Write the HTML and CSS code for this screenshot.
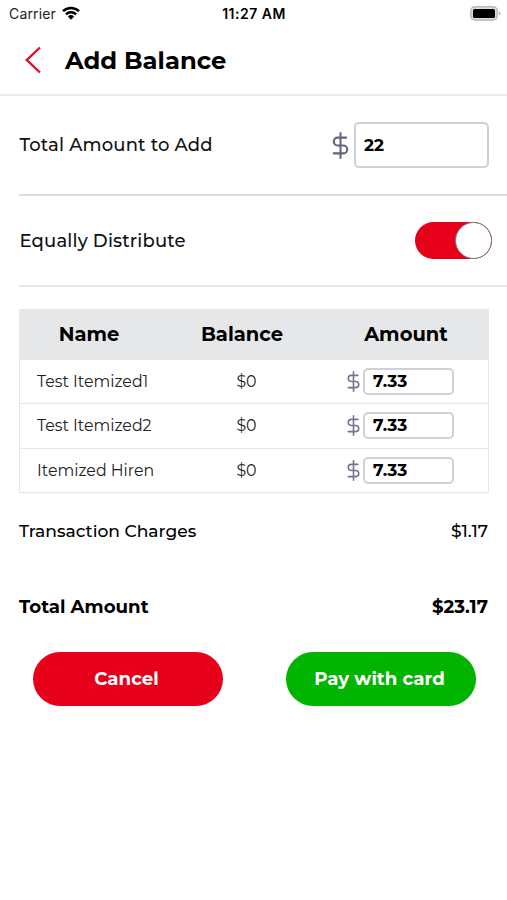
FILE: index.html
```html
<!DOCTYPE html>
<html lang="en">
<head>
<meta charset="utf-8">
<title>Add Balance</title>
<link rel="stylesheet" href="styles.css">
</head>
<body>
<svg class="symbols" aria-hidden="true">
  <symbol id="dollar" viewBox="5 0 14 24">
    <path d="M12 1v22M17 5H9.5a3.5 3.5 0 0 0 0 7h5a3.5 3.5 0 0 1 0 7H6" fill="none" stroke="currentColor" stroke-width="1.8" stroke-linecap="round" stroke-linejoin="round"/>
  </symbol>
</svg>
<div class="status">
  <div class="carrier"><span>Carrier</span>
    <svg class="wifi" viewBox="0 0 18 14"><path d="M1 5.2a11.3 11.3 0 0 1 16 0M3.9 8.3a7.2 7.2 0 0 1 10.2 0" fill="none" stroke="#000" stroke-width="2.5"/><path d="M5.8 10.5a4.7 4.7 0 0 1 6.4 0L9 13.8z"/></svg>
  </div>
  <div class="time">11:27 AM</div>
  <svg class="battery" viewBox="0 0 31 15"><rect x=".8" y=".8" width="26.4" height="13.2" rx="4" fill="#ddd" stroke="#b9b9b9" stroke-width="1.4"/><rect x="3" y="3" width="22" height="9" rx="1.6"/><path d="M28.8 5.2q1.8.6 1.8 2.2t-1.8 2.2z" fill="#b9b9b9"/></svg>
</div>
<header class="header">
  <svg class="back" viewBox="0 0 16 28"><path d="M15 1.5L1.8 14 15 26.5" fill="none" stroke="#df1024" stroke-width="2.4"/></svg>
  <h1 class="title">Add Balance</h1>
</header>
<main class="main">
  <section class="row row-total">
    <span class="label">Total Amount to Add</span>
    <div class="field"><svg class="dollar"><use href="#dollar"/></svg><div class="input">22</div></div>
  </section>
  <section class="row row-switch">
    <span class="label">Equally Distribute</span>
    <div class="switch"><div class="knob"></div></div>
  </section>
  <div class="table">
    <div class="tr th"><span>Name</span><span>Balance</span><span>Amount</span></div>
    <div class="tr"><span class="name">Test Itemized1</span><span class="zero">$0</span><div class="amount"><svg class="dollar-s"><use href="#dollar"/></svg><div class="input-s">7.33</div></div></div>
    <div class="tr"><span class="name">Test Itemized2</span><span class="zero">$0</span><div class="amount"><svg class="dollar-s"><use href="#dollar"/></svg><div class="input-s">7.33</div></div></div>
    <div class="tr"><span class="name">Itemized Hiren</span><span class="zero">$0</span><div class="amount"><svg class="dollar-s"><use href="#dollar"/></svg><div class="input-s">7.33</div></div></div>
  </div>
  <div class="sum"><span>Transaction Charges</span><span>$1.17</span></div>
  <div class="sum strong"><span>Total Amount</span><span>$23.17</span></div>
  <div class="actions"><div class="btn red">Cancel</div><div class="btn green">Pay with card</div></div>
</main>
</body>
</html>
```
FILE: styles.css
```css
* { box-sizing: border-box; }
body { margin: 0; width: 507px; height: 900px; overflow: hidden; background: #fff; color: #000; font-family: Montserrat, Inter, sans-serif; white-space: nowrap; }
svg { display: block; flex: none; overflow: visible; }
.symbols { width: 0; height: 0; position: absolute; }
.status { display: grid; grid-template-columns: 1fr auto 1fr; align-items: center; height: 27px; padding: 0 6px 0 9px; font: 400 14px/27px Inter, sans-serif; }
.carrier { display: flex; align-items: center; gap: 6px; color: #222; letter-spacing: .15px; }
.wifi { width: 18px; height: 14px; margin-top: -2px; }
.time { font-weight: 600; letter-spacing: .5px; margin-left: -2px; }
.battery { width: 31px; height: 15px; justify-self: end; }
.header { display: flex; align-items: center; height: 69px; padding: 0 0 2px 25px; border-bottom: 2px solid #ececee; }
.back { width: 16px; height: 28px; margin-right: 24px; }
.title { margin: 0; font-size: 24.3px; line-height: 30px; font-weight: 700; }
.main { padding-left: 19px; }
.row { display: flex; align-items: center; justify-content: space-between; font-size: 18px; font-weight: 500; color: #111; }
.row-total { height: 100px; padding-right: 18px; border-bottom: 2px solid #dcdde8; }
.row-switch { height: 91px; padding-right: 15px; border-bottom: 2px solid #e7e7ea; }
.label { letter-spacing: .16px; padding-left: .5px; }
.field { display: flex; align-items: center; gap: 5px; }
.dollar { width: 17px; height: 27px; color: #62657e; }
.input { width: 135px; height: 46px; border: 2px solid #ced0da; border-radius: 5px; padding-left: 8px; line-height: 42px; font-size: 17px; font-weight: 700; color: #000; }
.switch { width: 77px; height: 37px; border-radius: 19px; background: #e60019; display: flex; justify-content: flex-end; }
.knob { width: 37px; height: 37px; border-radius: 50%; background: #fff; border: 1.5px solid #777; }
.table { margin-top: 22px; width: 470px; border: 1px solid #e5e6e9; }
.tr { display: grid; grid-template-columns: 140px 166px 162px; align-items: center; height: 44px; border-top: 1px solid #e5e6e9; color: #222; font-size: 15.8px; }
.tr + .tr + .tr { height: 44.5px; }
.th { height: 49px; border: 0; background: #e6e7e9; color: #000; font-size: 19.5px; font-weight: 700; text-align: center; }
.th span { margin: -1px 2px 0 0; }
.name { padding-left: 17px; }
.zero { text-align: center; padding-left: 7px; }
.amount { display: flex; align-items: center; padding-left: 21px; gap: 3px; }
.dollar-s { width: 13px; height: 21px; color: #72758d; }
.input-s { width: 91px; height: 27px; border: 2px solid #ced0dc; border-radius: 5px; padding-left: 8px; line-height: 23px; font-size: 17px; font-weight: 700; color: #000; }
.sum { display: flex; justify-content: space-between; align-items: center; height: 75.5px; padding-right: 19px; font-size: 17.1px; font-weight: 500; }
.strong { font-size: 18.2px; font-weight: 700; }
.actions { display: flex; gap: 63px; padding: 8px 0 0 13.5px; }
.btn { width: 190px; height: 54px; border-radius: 27px; color: #fff; font-size: 18.2px; line-height: 54px; font-weight: 700; text-align: center; padding-right: 2px; }
.red { background: #e60019; }
.green { background: #00b400; }
```
